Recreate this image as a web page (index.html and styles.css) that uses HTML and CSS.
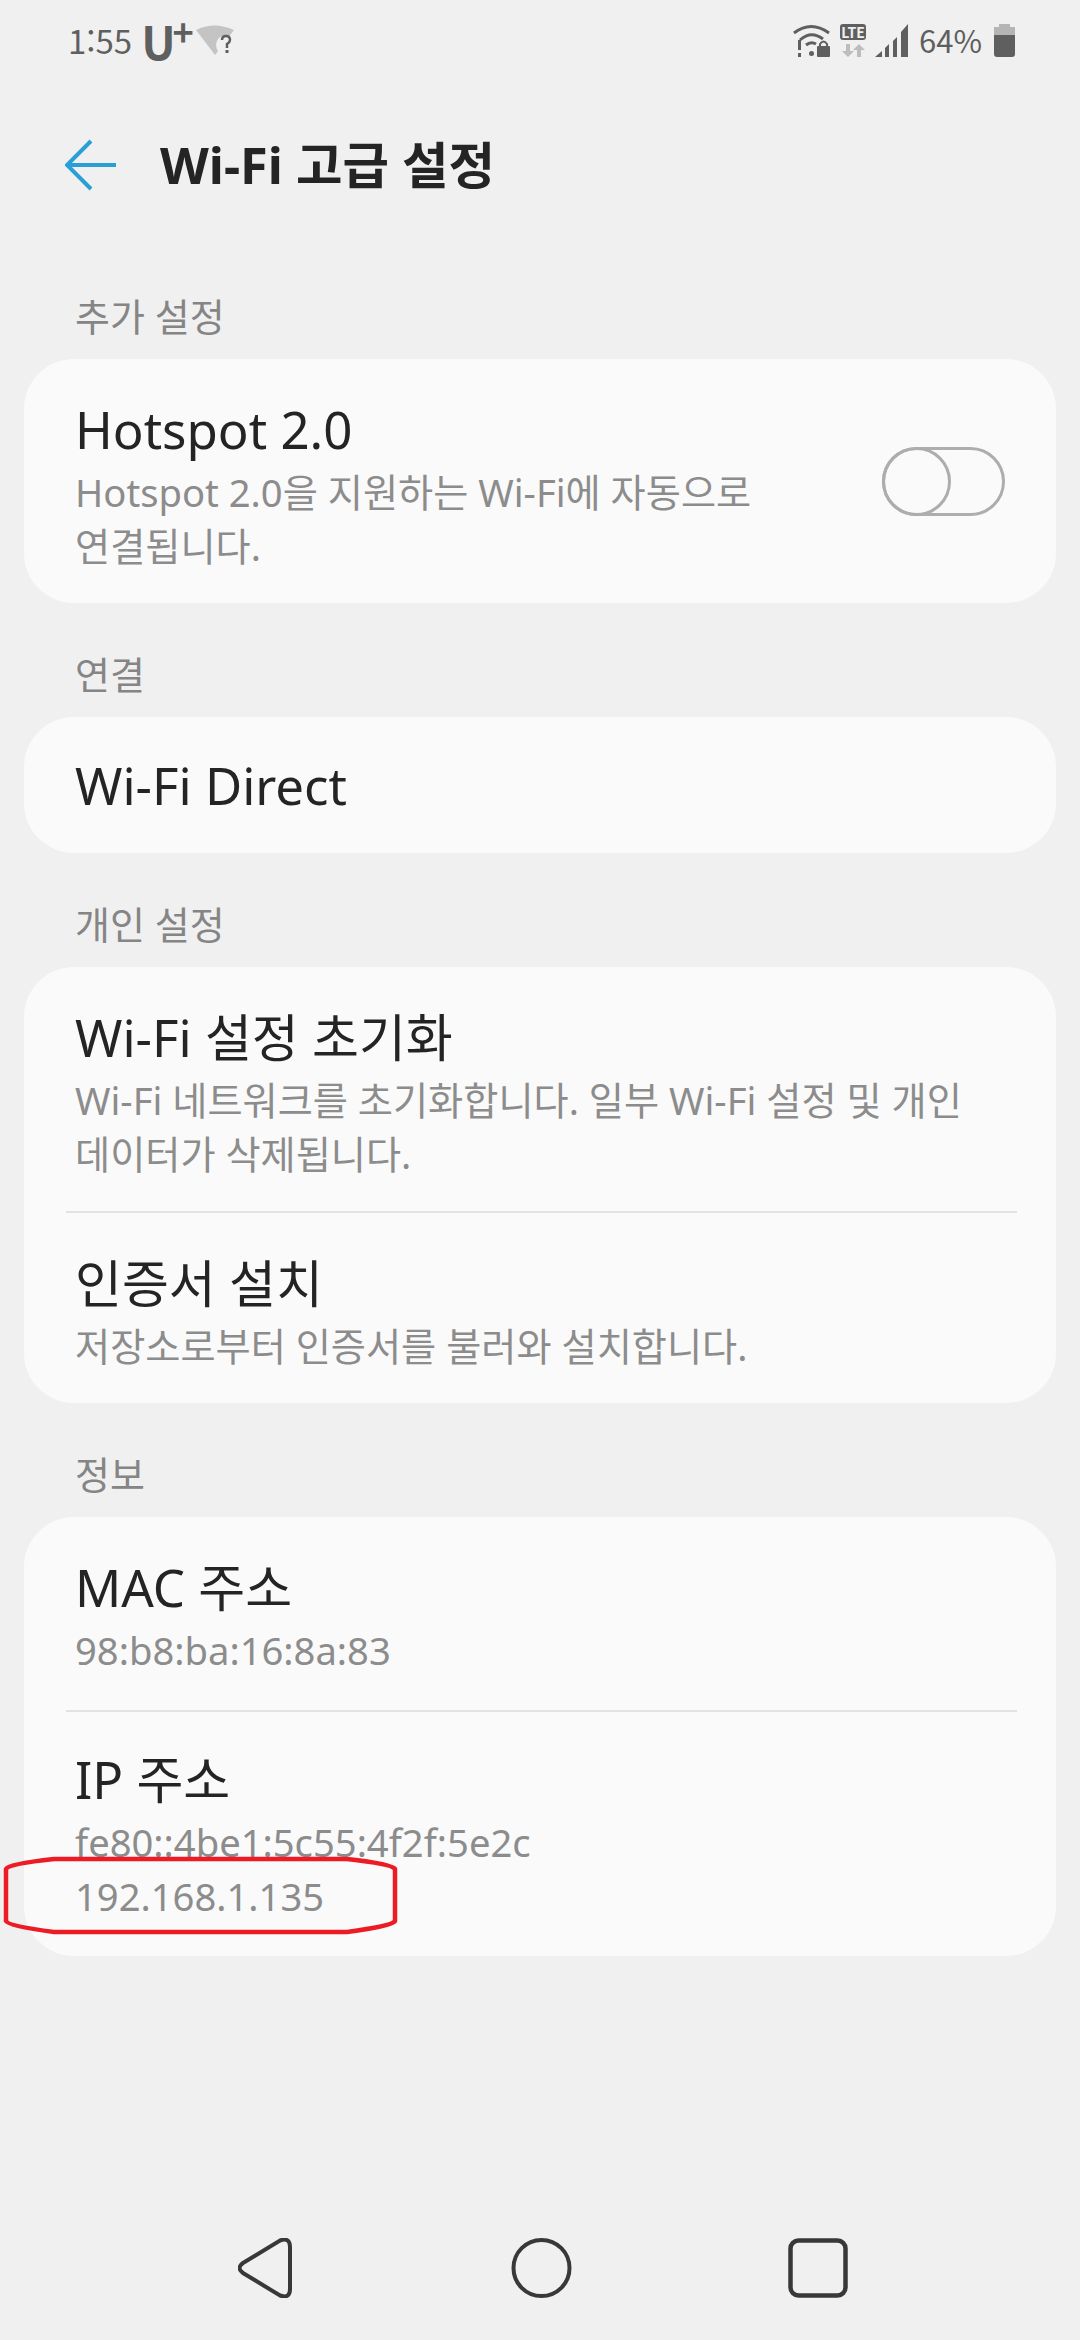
FILE: index.html
```html
<!DOCTYPE html>
<html lang="ko">
<head>
  <meta charset="UTF-8">
  <meta name="viewport" content="width=device-width, initial-scale=1.0">
  <title>Wi-Fi 고급 설정</title>
  <link rel="stylesheet" href="styles.css">
</head>
<body>
  <div class="status-bar">
    <div class="status-left">
      <span class="time">1:55</span>
      <span class="carrier">U<sup>+</sup></span>
      <svg class="wifi-off" width="38" height="32" viewBox="0 0 38 32">
        <path d="M0 6 Q18 -3 38 6 L19 31 Z" fill="#c4c4c4"/>
        <circle cx="30" cy="21" r="10" fill="#f0f0f0"/>
        <path d="M26 16 Q26 12 30 12 Q34 12 34 16 Q34 18 31 20 L31 24" fill="none" stroke="#5f5f5f" stroke-width="2.500"/>
        <rect x="29.500" y="26" width="3" height="3" fill="#5f5f5f"/>
      </svg>
    </div>
    <div class="status-right">
      <svg class="wifi-lock" width="37" height="33" viewBox="0 0 37 33">
        <path d="M1 9 Q18 -4 36 9" fill="none" stroke="#5f5f5f" stroke-width="3"/>
        <path d="M7 16 Q18 6 30 15" fill="none" stroke="#5f5f5f" stroke-width="3"/>
        <path d="M13 21 Q18 17 23 20" fill="none" stroke="#5f5f5f" stroke-width="3"/>
        <circle cx="18.500" cy="29.500" r="2.500" fill="#5f5f5f"/>
        <rect x="5" y="16" width="3" height="10" fill="#5f5f5f"/>
        <rect x="5" y="29" width="3" height="4" fill="#5f5f5f"/>
        <rect x="24" y="22" width="13" height="11" rx="1" fill="#5f5f5f"/>
        <path d="M27 23 V20 Q30.500 15 34 20 V23" fill="none" stroke="#5f5f5f" stroke-width="2"/>
      </svg>
      <div class="lte">
        <span class="lte-badge">LTE</span>
        <svg width="24" height="13" viewBox="0 0 24 13">
          <path d="M7 13 L1 7 H5 V0 H9 V7 H13 Z M18 0 L24 6 H20 V13 H16 V6 H12 Z" fill="#bdbdbd"/>
        </svg>
      </div>
      <svg class="signal" width="33" height="33" viewBox="0 0 33 33">
        <path d="M0 33 L7 27 V33 Z M10 24 L14 20 V33 H10 Z M18 17 L22 13 V33 H18 Z M26 8 L33 0 V33 H26 Z" fill="#5f5f5f"/>
      </svg>
      <span class="battery-text">64%</span>
      <div class="battery">
        <div class="battery-nub"></div>
        <div class="battery-cap"></div>
        <div class="battery-fill"></div>
      </div>
    </div>
  </div>

  <div class="app-bar">
    <svg class="back" width="52" height="52" viewBox="0 0 52 52">
      <path d="M26 2 L2 26 L26 50 M2 26 H51" fill="none" stroke="#2a9fd6" stroke-width="4"/>
    </svg>
    <h1>Wi-Fi 고급 설정</h1>
  </div>

  <div class="content">
    <div class="section-label">추가 설정</div>
    <div class="card">
      <div class="row toggle-row">
        <div class="row-text">
          <div class="row-title">Hotspot 2.0</div>
          <div class="row-sub">Hotspot 2.0을 지원하는 Wi-Fi에 자동으로<br>연결됩니다.</div>
        </div>
        <div class="switch"><div class="knob"></div></div>
      </div>
    </div>

    <div class="section-label">연결</div>
    <div class="card">
      <div class="row single">
        <div class="row-title">Wi-Fi Direct</div>
      </div>
    </div>

    <div class="section-label">개인 설정</div>
    <div class="card">
      <div class="row">
        <div class="row-title">Wi-Fi 설정 초기화</div>
        <div class="row-sub">Wi-Fi 네트워크를 초기화합니다. 일부 Wi-Fi 설정 및 개인<br>데이터가 삭제됩니다.</div>
      </div>
      <div class="divider"></div>
      <div class="row">
        <div class="row-title">인증서 설치</div>
        <div class="row-sub">저장소로부터 인증서를 불러와 설치합니다.</div>
      </div>
    </div>

    <div class="section-label">정보</div>
    <div class="card info-card">
      <div class="row">
        <div class="row-title">MAC 주소</div>
        <div class="row-sub">98:b8:ba:16:8a:83</div>
      </div>
      <div class="divider"></div>
      <div class="row">
        <div class="row-title">IP 주소</div>
        <div class="row-sub">fe80::4be1:5c55:4f2f:5e2c<br>192.168.1.135</div>
      </div>
    </div>
  </div>

  <div class="nav-bar">
    <svg width="56" height="60" viewBox="0 0 56 60">
      <path d="M5 25 L42 2.500 Q52 -1 52 9 V51 Q52 61 42 57.500 L5 35 Q-2 30 5 25 Z" fill="none" stroke="#383838" stroke-width="4"/>
    </svg>
    <svg width="61" height="60" viewBox="0 0 61 60">
      <circle cx="30.500" cy="30" r="28" fill="none" stroke="#383838" stroke-width="4"/>
    </svg>
    <svg width="60" height="60" viewBox="0 0 60 60">
      <rect x="2.500" y="2.500" width="55" height="55" rx="8" fill="none" stroke="#383838" stroke-width="4.500"/>
    </svg>
  </div>

  <!-- marker someone drew over the screenshot -->
  <svg class="marker" width="398" height="80" viewBox="0 0 398 80">
    <path d="M4 13 Q6 8 52 3 H345 Q390 8 393 13 V65 Q390 70 345 76 H52 Q6 70 4 65 Z" fill="none" stroke="#ed1c24" stroke-width="4.500"/>
  </svg>
</body>
</html>
```

FILE: styles.css
```css
body {
  font-family: "Noto Sans", "Noto Sans CJK KR", sans-serif;
  background: #f0f0f0;
  margin: 0;
  padding: 0;
  width: 1080px;
  height: 2340px;
  display: flex;
  flex-direction: column;
  position: relative;
  overflow: hidden;
}

.status-bar {
  height: 80px;
  display: flex;
  justify-content: space-between;
  align-items: center;
  padding: 0 65px 0 68px;
  color: #5f5f5f;
  font-family: "Noto Sans CJK KR", sans-serif;
}

.status-left, .status-right {
  display: flex;
  align-items: center;
}

.time {
  font-size: 33px;
  line-height: 40px;
}

.carrier {
  font-size: 46px;
  line-height: 40px;
  font-weight: 700;
  margin-left: 9px;
}

.carrier sup {
  font-size: 36px;
  line-height: 0;
  vertical-align: 14px;
  margin-left: -3px;
}

.wifi-off {
  margin-left: 2px;
}

.lte {
  display: flex;
  flex-direction: column;
  align-items: center;
  gap: 4px;
  margin: 0 9px 0 10px;
}

.lte-badge {
  background: #5f5f5f;
  color: #f0f0f0;
  font-size: 14px;
  font-weight: 700;
  line-height: 16px;
  width: 26px;
  text-align: center;
  border-radius: 3px;
}

.battery-text {
  font-size: 31px;
  line-height: 40px;
  margin: 0 12px 0 11px;
}

.battery {
  width: 21px;
  height: 33px;
  display: flex;
  flex-direction: column;
  align-items: center;
}

.battery-nub {
  width: 11px;
  height: 3px;
  background: #b5b5b5;
}

.battery-cap {
  width: 100%;
  height: 8px;
  background: #b5b5b5;
}

.battery-fill {
  width: 100%;
  flex: 1;
  background: #5f5f5f;
  border-radius: 0 0 3px 3px;
}

.app-bar {
  height: 90px;
  display: flex;
  align-items: center;
  padding: 40px 0 35px 65px;
  gap: 43px;
}

.app-bar h1 {
  margin: 0;
  font-size: 50.500px;
  line-height: 60px;
  font-weight: 700;
  color: #242424;
}

.content {
  flex: 1;
  padding: 0 24px;
}

.section-label {
  font-size: 38px;
  line-height: 48px;
  color: #858585;
  padding-left: 51px;
  margin: 47px 0 19px;
}

.card {
  background: #fafafa;
  border-radius: 50px;
}

.row {
  padding: 38px 52px 30px 51px;
}

.row.single {
  padding: 36px 51px;
}

.info-card .row:first-child {
  padding-bottom: 33px;
}

.info-card .row:last-child {
  padding-top: 35px;
  padding-bottom: 33px;
}

.toggle-row {
  display: flex;
  align-items: center;
  justify-content: space-between;
  padding-right: 51px;
}

.row-title {
  font-size: 51px;
  line-height: 64px;
  color: #242424;
}

.row-sub {
  font-size: 38.200px;
  line-height: 54px;
  margin-top: 4px;
  color: #8c8c8c;
}

.divider {
  height: 2px;
  margin: 0 39px 0 42px;
  background: #e2e2e2;
}

.switch {
  width: 123px;
  height: 69px;
  box-sizing: border-box;
  border: 3px solid #adadad;
  border-radius: 35px;
  margin-bottom: 8px;
  position: relative;
}

.knob {
  position: absolute;
  left: -3px;
  top: -3px;
  width: 69px;
  height: 69px;
  box-sizing: border-box;
  border: 3px solid #adadad;
  border-radius: 50%;
}

.nav-bar {
  height: 102px;
  display: flex;
  justify-content: space-between;
  align-items: flex-start;
  padding: 0 232px 0 238px;
}

.marker {
  position: absolute;
  left: 2px;
  top: 1856px;
}
```
